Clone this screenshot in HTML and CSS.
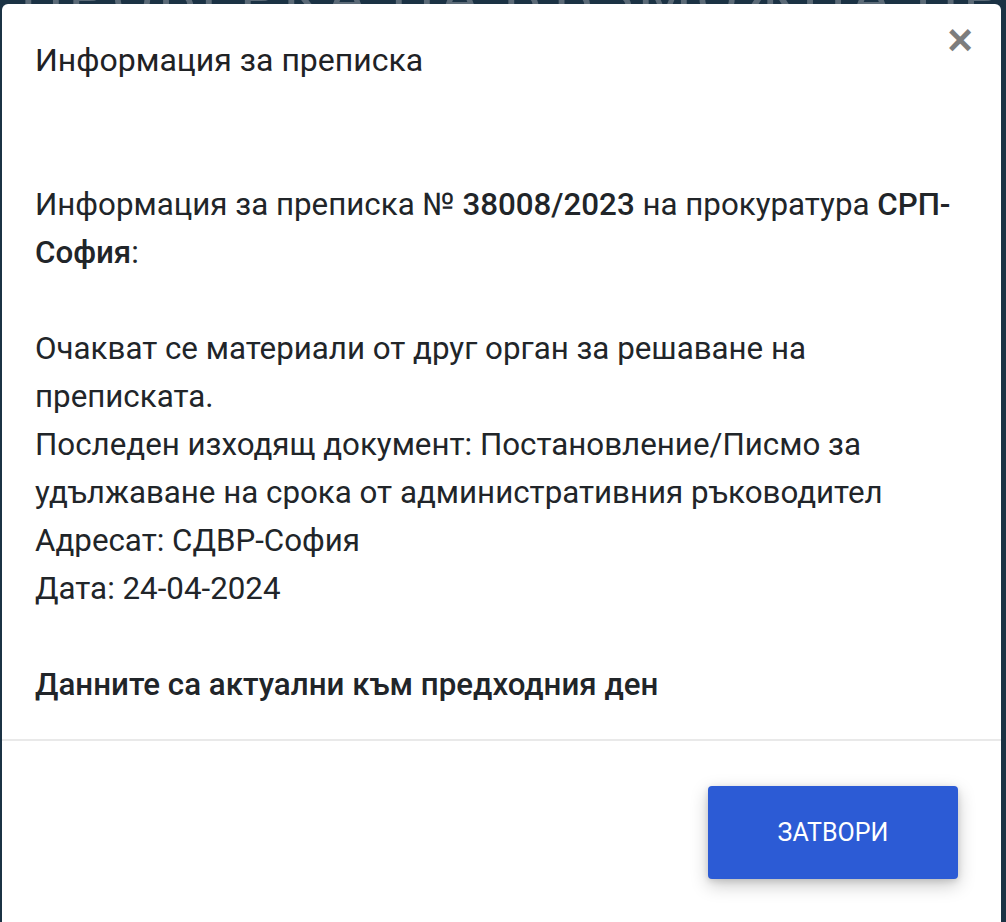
FILE: index.html
```html
<!DOCTYPE html>
<html lang="bg">
<head>
<meta charset="UTF-8" />
<title>Информация за преписка</title>
<meta name="viewport" content="width=device-width, initial-scale=1.0">
<link rel="stylesheet" href="styles.css">
</head>
<body>

  <div class="backdrop-text">ПРОВЕРКА НА ВЪЗМОЖНА ПРЕПИСКА</div>

  <div class="modal">
    <div class="modal-header">
      <h5 class="modal-title">Информация за преписка</h5>
      <button class="close" type="button" aria-label="Close">&times;</button>
    </div>

    <div class="modal-body">
      Информация за преписка № <b>38008/2023</b> на прокуратура <b>СРП-София</b>:<br>
      <br>
      Очакват се материали от друг орган за решаване на преписката.<br>
      Последен изходящ документ: Постановление/Писмо за удължаване на срока от административния ръководител<br>
      Адресат: СДВР-София<br>
      Дата: 24-04-2024<br>
      <br>
      <b>Данните са актуални към предходния ден</b>
    </div>

    <div class="modal-footer">
      <button class="btn-close" type="button">Затвори</button>
    </div>
  </div>

</body>
</html>
```

FILE: styles.css
```css
html, body {
  height: 100%;
}
body {
  margin: 0;
  padding: 4px 5px 0 2px;
  background-color: #1b3244;
  font-family: Roboto, "Noto Sans", Arial, sans-serif;
  color: #212529;
  overflow: hidden;
  box-sizing: border-box;
  display: flex;
  flex-direction: column;
}
.backdrop-text {
  position: absolute;
  top: -40px;
  left: 0;
  right: 0;
  padding-left: 20px;
  overflow: hidden;
  font-size: 62px;
  color: #5b6a77;
  letter-spacing: 4px;
  white-space: nowrap;
}
.modal {
  position: relative;
  flex: 1;
  background-color: #fff;
  border-radius: 6px 6px 0 0;
}
.modal-header {
  display: flex;
  align-items: flex-start;
  justify-content: space-between;
  padding: 40px 28px 0 33px;
  height: 100px;
  box-sizing: border-box;
}
.modal-title {
  margin: 0;
  font-size: 32px;
  font-weight: 400;
  line-height: 32px;
  color: #1f2225;
}
.close {
  border: 0;
  background: none;
  padding: 0;
  margin-top: -24px;
  font-size: 44px;
  line-height: 40px;
  font-weight: 700;
  color: #7d7d7d;
  font-family: Arial, sans-serif;
}
.modal-body {
  padding: 77px 40px 30px 33px;
  font-size: 31.3px;
  line-height: 48px;
}
.modal-body b {
  font-weight: 500;
}
.modal-footer {
  border-top: 2px solid #e9e9e9;
  display: flex;
  justify-content: flex-end;
  padding: 45px 43px 0 0;
}
.btn-close {
  width: 250px;
  height: 93px;
  border: 0;
  border-radius: 4px;
  background-color: #2c5bd5;
  color: #fff;
  font-family: Roboto, Arial, sans-serif;
  font-size: 25px;
  text-transform: uppercase;
  box-shadow: 0 6px 18px rgba(0, 0, 0, 0.22), 0 2px 6px rgba(0, 0, 0, 0.12);
}
```
